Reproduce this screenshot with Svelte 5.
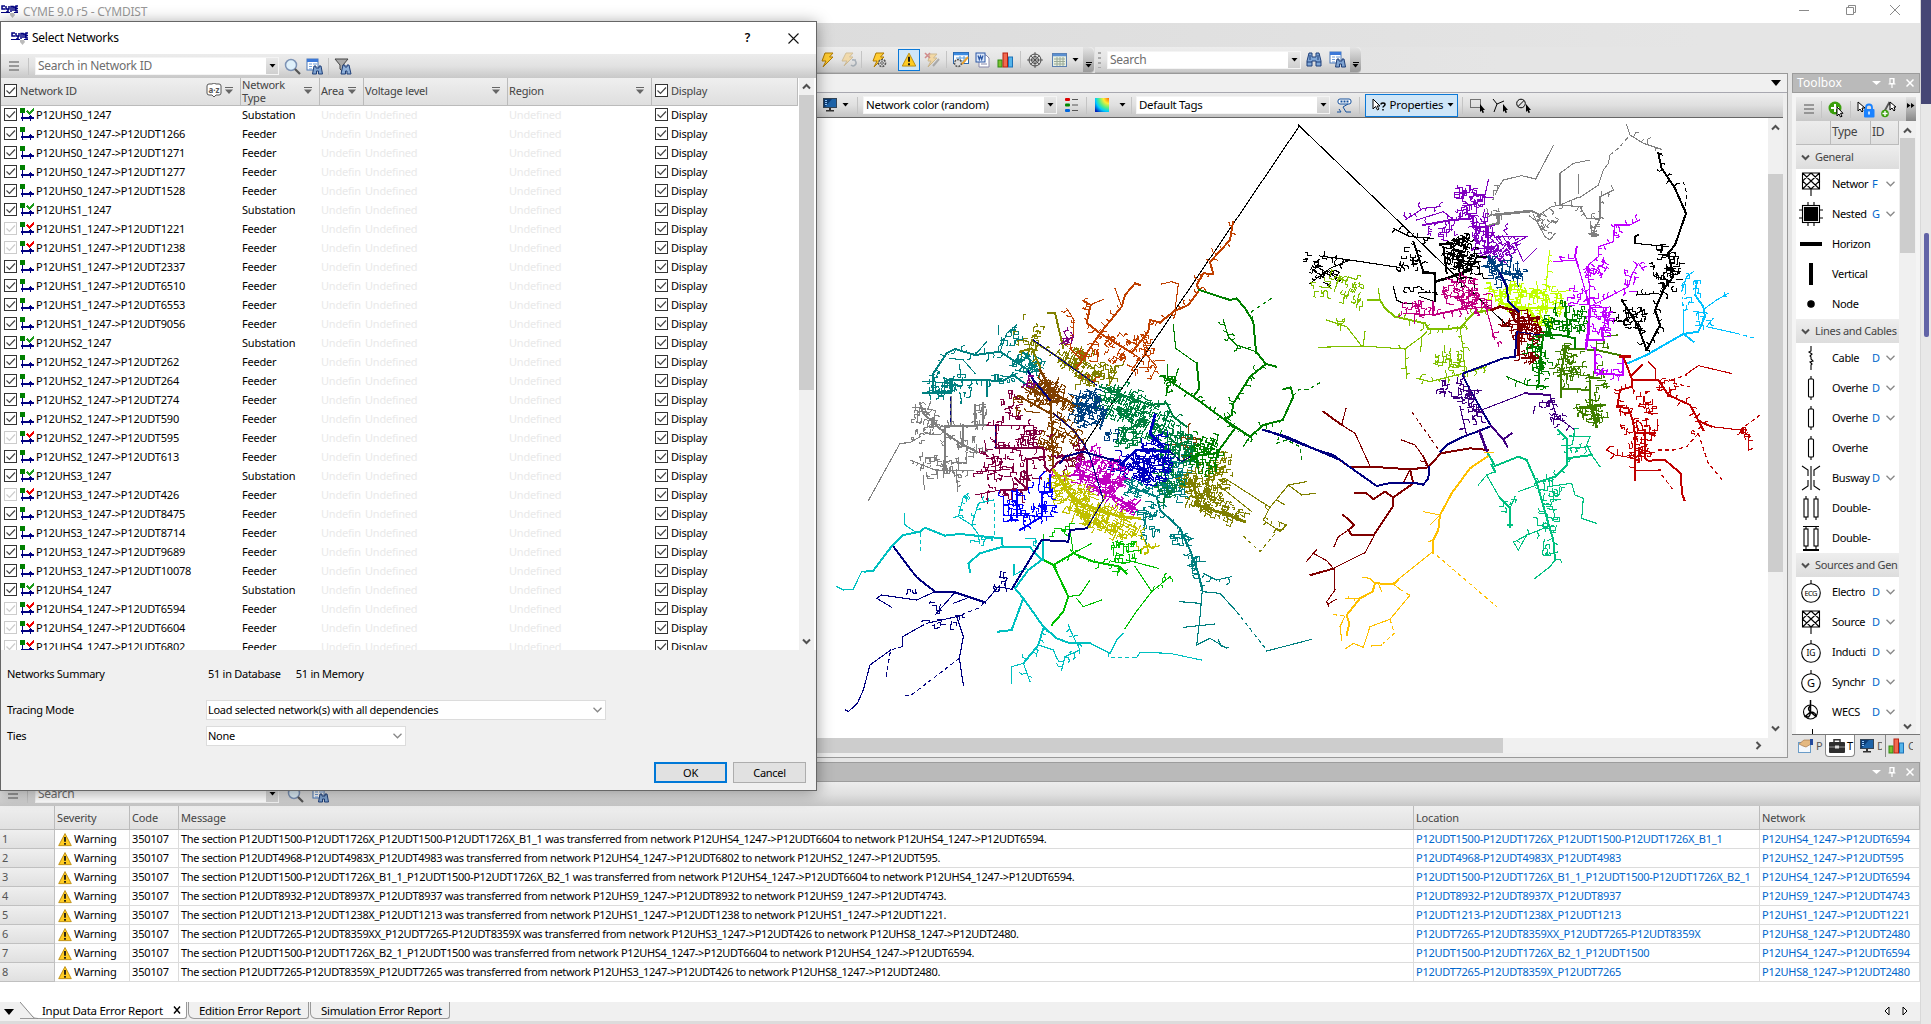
<script>
  const networks = [
    ['P12UHS0_1247', 's'], ['P12UHS0_1247->P12UDT1266', 'f'], ['P12UHS0_1247->P12UDT1271', 'f'],
    ['P12UHS0_1247->P12UDT1277', 'f'], ['P12UHS0_1247->P12UDT1528', 'f'], ['P12UHS1_1247', 's'],
    ['P12UHS1_1247->P12UDT1221', 'r'], ['P12UHS1_1247->P12UDT1238', 'r'], ['P12UHS1_1247->P12UDT2337', 'f'],
    ['P12UHS1_1247->P12UDT6510', 'f'], ['P12UHS1_1247->P12UDT6553', 'f'], ['P12UHS1_1247->P12UDT9056', 'f'],
    ['P12UHS2_1247', 's'], ['P12UHS2_1247->P12UDT262', 'f'], ['P12UHS2_1247->P12UDT264', 'f'],
    ['P12UHS2_1247->P12UDT274', 'f'], ['P12UHS2_1247->P12UDT590', 'f'], ['P12UHS2_1247->P12UDT595', 'r'],
    ['P12UHS2_1247->P12UDT613', 'f'], ['P12UHS3_1247', 's'], ['P12UHS3_1247->P12UDT426', 'r'],
    ['P12UHS3_1247->P12UDT8475', 'f'], ['P12UHS3_1247->P12UDT8714', 'f'], ['P12UHS3_1247->P12UDT9689', 'f'],
    ['P12UHS3_1247->P12UDT10078', 'f'], ['P12UHS4_1247', 's'], ['P12UHS4_1247->P12UDT6594', 'r'],
    ['P12UHS4_1247->P12UDT6604', 'r'], ['P12UHS4_1247->P12UDT6802', 'r']
  ];

  const errors = [
    ['P12UDT1500-P12UDT1726X_P12UDT1500-P12UDT1726X_B1_1', 'P12UHS4_1247->P12UDT6604', 'P12UHS4_1247->P12UDT6594'],
    ['P12UDT4968-P12UDT4983X_P12UDT4983', 'P12UHS4_1247->P12UDT6802', 'P12UHS2_1247->P12UDT595'],
    ['P12UDT1500-P12UDT1726X_B1_1_P12UDT1500-P12UDT1726X_B2_1', 'P12UHS4_1247->P12UDT6604', 'P12UHS4_1247->P12UDT6594'],
    ['P12UDT8932-P12UDT8937X_P12UDT8937', 'P12UHS9_1247->P12UDT8932', 'P12UHS9_1247->P12UDT4743'],
    ['P12UDT1213-P12UDT1238X_P12UDT1213', 'P12UHS1_1247->P12UDT1238', 'P12UHS1_1247->P12UDT1221'],
    ['P12UDT7265-P12UDT8359XX_P12UDT7265-P12UDT8359X', 'P12UHS3_1247->P12UDT426', 'P12UHS8_1247->P12UDT2480'],
    ['P12UDT1500-P12UDT1726X_B2_1_P12UDT1500', 'P12UHS4_1247->P12UDT6604', 'P12UHS4_1247->P12UDT6594'],
    ['P12UDT7265-P12UDT8359X_P12UDT7265', 'P12UHS3_1247->P12UDT426', 'P12UHS8_1247->P12UDT2480']
  ];

  const groups = [
    ['General', [['net', 'Networ', 'F'], ['nested', 'Nested', 'G'], ['horiz', 'Horizon', ''], ['vert', 'Vertical', ''], ['node', 'Node', '']]],
    ['Lines and Cables', [['cable', 'Cable', 'D'], ['over', 'Overhe', 'D'], ['over', 'Overhe', 'D'], ['over', 'Overhe', ''], ['bus', 'Busway', 'D'], ['dbl', 'Double-', ''], ['dbl2', 'Double-', '']]],
    ['Sources and Gen', [['ecg', 'Electro', 'D'], ['net', 'Source', 'D'], ['ig', 'Inducti', 'D'], ['g', 'Synchr', 'D'], ['wecs', 'WECS', 'D']]]
  ];

  // Toolbar slots: [item, slot width]
  const mainBar = [['bolt', 20], ['boltFade', 24], ['sep', 1], ['boltGear', 34], ['warnBtn', 26], ['boltX', 20], ['sep', 8], ['tableGear', 22], ['word', 20], ['chart', 26], ['sep', 4], ['radar', 26], ['grid', 22], ['caret', 10]];

  // Deterministic pseudo random numbers so the drawing is stable
  let seed = 20117;
  const rnd = () => ((seed = (seed * 16807) % 2147483647) / 2147483647);
  const f = (n) => n.toFixed(1);

  // Short stepped walks filling an ellipse, like street-level lateral lines
  function cluster(cx, cy, rx, ry, deg = 0, dens = 1) {
    const a = (deg * Math.PI) / 180;
    const n = Math.round((rx * ry * dens) / 50);
    let d = '';
    for (let i = 0; i < n; i++) {
      const r = Math.sqrt(rnd()), t = rnd() * 6.283;
      const u = r * rx * Math.cos(t), v = r * ry * Math.sin(t);
      let x = cx + u * Math.cos(a) - v * Math.sin(a);
      let y = cy + u * Math.sin(a) + v * Math.cos(a);
      let k = Math.floor(rnd() * 4);
      d += `M${f(x)} ${f(y)}`;
      const steps = 2 + Math.floor(rnd() * 3);
      for (let s = 0; s < steps; s++) {
        const ang = a + (k * Math.PI) / 2 + (rnd() - 0.5) * 0.45;
        const len = 5 + rnd() * 11;
        x += Math.cos(ang) * len;
        y += Math.sin(ang) * len;
        d += `L${f(x)} ${f(y)}`;
        k += rnd() < 0.5 ? 1 : rnd() < 0.6 ? 3 : 0;
      }
    }
    return d;
  }

  // Side branches along a feeder trunk
  function twigs(pts, len) {
    let d = '';
    for (let i = 1; i < pts.length; i++) {
      const [x0, y0] = pts[i - 1], [x1, y1] = pts[i];
      const L = Math.hypot(x1 - x0, y1 - y0);
      const ang = Math.atan2(y1 - y0, x1 - x0);
      for (let s = rnd() * 14; s < L; s += 10 + rnd() * 20) {
        const side = rnd() < 0.5 ? 1 : -1;
        const b = ang + side * (1.2 + rnd() * 0.7);
        const l = len * (0.4 + rnd());
        const x = x0 + Math.cos(ang) * s, y = y0 + Math.sin(ang) * s;
        const mx = x + Math.cos(b) * l, my = y + Math.sin(b) * l;
        d += `M${f(x)} ${f(y)}L${f(mx)} ${f(my)}`;
        if (rnd() < 0.5) d += `L${f(mx + Math.cos(b + 1) * l * 0.6)} ${f(my + Math.sin(b + 1) * l * 0.6)}`;
      }
    }
    return d;
  }

  const parse = (s) => s.split(' ').map((p) => p.split(',').map(Number));

  // [colour, clusters, [style, points]...]; style: weight 1-3, "t" with branches, "d" dashed
  const west = [
    ['#000', [], ['1', '1440,-435 795,520']],
    ['#808080', [[315, 470, 45, 55, 10, .45], [360, 590, 75, 35, 0, .5], [440, 530, 40, 30, 0, .5], [480, 430, 22, 30, 0, .7], [300, 410, 20, 25, 0, .5]],
      ['1', '145,692 240,520 270,518 300,500'], ['2t', '300,400 310,430 370,485 420,520 470,545'], ['2t', '375,600 375,468 500,466'], ['2', '465,466 465,405'], ['2', '490,466 490,400'], ['2', '428,466 428,520'], ['2', '392,380 392,466'], ['1t', '270,570 345,600 460,602'], ['1t', '410,600 412,665']],
    ['#008080', [[620, 280, 40, 24, 20, 2], [350, 350, 45, 32, 0, .8], [565, 205, 35, 38, 0, .4], [425, 345, 38, 30, 0, .6], [560, 325, 30, 15, 0, .8], [960, 650, 45, 25, 20, 1], [990, 755, 28, 55, 0, .7], [1065, 620, 40, 70, 0, 1], [1080, 800, 22, 22, 0, 1], [1115, 880, 20, 30, 0, .6]],
      ['2t', '370,370 340,370 340,310 380,250 405,237 465,255 540,245 625,300'], ['2t', '392,330 550,332 580,315 620,345'], ['2', '310,370 392,370 392,330'], ['2', '500,330 500,378'], ['1t', '540,245 560,190 590,165'], ['1', '465,255 500,215'], ['1', '390,265 430,270 465,310'],
      ['2t', '930,650 1010,680 1020,720 1080,775 1110,840'], ['2t', '1110,840 1135,910 1147,960'], ['1', '1147,960 1140,1040 1130,1125 1170,1105 1220,1135'], ['1', '1147,965 1200,970 1250,1025'], ['1d', '1250,1025 1340,1140'], ['1', '1340,1143 1475,1108'], ['1t', '1150,910 1190,930 1235,920'], ['1', '1090,1072 1185,1062'], ['1', '1080,995 1140,1000'], ['1', '1195,1110 1205,1130 1225,1133']],
    ['#808000', [[625, 185, 40, 40, 0, .5], [785, 290, 55, 50, 30, .7], [860, 305, 30, 25, 0, .7], [760, 260, 50, 25, 30, .5], [825, 325, 50, 20, 0, 1], [1150, 630, 65, 55, 0, 1.1], [1190, 710, 90, 32, 20, 1], [1220, 580, 28, 40, 0, .4]],
      ['2', '685,128 705,128 730,235'], ['2t', '635,210 720,265 815,335'], ['2t', '600,245 635,235 660,290'], ['1', '870,285 885,310 870,340'], ['1', '1215,625 1350,712'], ['1', '1350,712 1405,645 1460,635'], ['1', '1405,645 1445,675 1485,670'], ['1', '1370,690 1395,705'], ['1', '1195,645 1295,725'], ['1t', '1350,712 1330,750 1380,785 1400,765 1375,755'], ['3', '1130,705 1225,735 1275,755'], ['3', '1120,640 1135,700'], ['1d', '1270,798 1320,845 1370,785']],
    ['#804000', [[680, 365, 52, 30, 30, 1.8], [725, 510, 55, 65, 20, .65], [620, 400, 38, 30, 0, .6], [1105, 520, 20, 42, 0, 1.1], [735, 395, 40, 15, 25, 1.6]],
      ['3t', '660,300 700,370 775,410'], ['2t', '690,370 695,460 700,590'], ['2t', '700,430 760,480 790,520'], ['2t', '620,350 680,380'], ['2', '600,380 690,430']],
    ['#008040', [[890, 395, 55, 52, 25, 1.1], [985, 440, 75, 50, 25, 1.1], [920, 500, 35, 35, 0, 1], [1075, 540, 55, 60, 0, 1], [1045, 640, 35, 45, 0, 1]],
      ['2t', '840,350 990,405 1040,400 1060,440 1100,470'], ['2', '900,520 920,480 960,460'], ['2', '1020,480 1080,530 1075,570']],
    ['#004080', [[810, 415, 48, 52, 20, 1.4], [875, 490, 15, 22, 0, .7]], ['2', '760,400 860,420 840,475']],
    ['#c04000', [[890, 240, 60, 45, 30, .4], [990, 280, 25, 45, 0, .4], [970, 210, 25, 30, 0, .6], [795, 330, 18, 10, 0, .9], [820, 250, 40, 30, 0, .3]],
      ['1t', '1239,-144 1230,-90 1170,-24'], ['2', '1239,-144 1230,-90 1170,-24 1180,12'], ['2t', '1180,12 1150,10 1130,45 1138,60 1105,105 1060,125 1020,158 990,150 985,185 935,248 880,215 840,190 800,158 812,105 790,92'], ['2t', '905,110 840,190 770,295'], ['2', '960,45 945,40 915,75 905,110'], ['1', '885,55 905,110'], ['1t', '740,115 762,150 760,190 750,235 780,265'], ['1', '1025,42 1055,35 1075,42 1065,120'], ['1t', '970,225 980,255 1010,290 990,330'], ['1t', '935,248 960,265 935,300'], ['1', '810,105 850,88']],
    ['#008000', [[1155, 565, 45, 42, 0, 1], [1050, 340, 25, 22, 0, .8], [1150, 520, 50, 25, 20, .5]],
      ['2', '1138,60 1230,90 1250,85 1275,115 1300,155 1308,245 1338,282'], ['2t', '1338,282 1290,320 1240,400 1235,435 1215,450 1245,475'], ['2', '1245,475 1190,550 1150,555 1110,560'], ['1', '1060,165 1067,235 1130,280'], ['2', '1130,280 1138,355 1120,380'], ['2t', '1120,380 1215,450 1290,500 1330,465 1388,450'], ['2', '1388,450 1420,380 1412,352 1390,358'], ['2t', '1030,320 1120,380'], ['1d', '1420,378 1435,360 1465,358 1500,338'], ['1t', '1210,150 1225,200 1250,225 1308,245'], ['1d', '1355,85 1295,125 1300,155'], ['1', '1060,345 1075,295'], ['1', '1290,500 1270,530'], ['1d', '1385,480 1370,520 1400,510 1440,530 1445,575'], ['2', '1338,282 1368,290']],
    ['#0000c0', [[1000, 575, 50, 68, 10, 1.2], [910, 585, 40, 30, 0, .8], [940, 610, 40, 30, 30, .6]],
      ['3', '900,585 950,540 1050,545'], ['3', '1005,435 990,490 1030,530'], ['2', '935,565 970,600 970,630']],
    ['#800040', [[560, 600, 85, 80, 0, .42], [570, 410, 30, 45, 0, .5], [640, 500, 45, 35, 0, .6], [735, 570, 40, 18, -15, .8], [780, 540, 20, 20, 0, 1]],
      ['2t', '527,465 527,533 670,533 675,590 690,605'], ['1t', '500,466 640,466 640,530'], ['2', '675,560 620,568 620,655 585,625'], ['1t', '620,660 540,660 465,675'], ['1t', '470,605 540,600'], ['2', '690,605 715,575 780,560 795,525']],
    ['#c000c0', [[840, 615, 80, 50, 15, 1.3], [900, 690, 55, 22, 35, 1.6], [830, 550, 20, 18, 0, .6]], ['2t', '690,620 780,615 900,640'], ['2', '850,660 950,720']],
    ['#c0c000', [[725, 645, 30, 45, -20, 1.2], [795, 710, 60, 50, 20, 1.2], [880, 760, 85, 38, 25, 1.1], [980, 835, 18, 28, 0, .8]], ['3', '700,600 740,660 780,700 900,740 960,745'], ['2', '740,660 800,760'], ['1t', '960,780 985,840']],
    ['#0000ff', [[600, 710, 52, 50, 0, .5], [685, 690, 30, 45, 0, .55]], ['2', '660,665 690,665 690,615'], ['2t', '665,670 665,740 600,780'], ['1t', '550,735 700,740'], ['2t', '590,660 590,740'], ['1', '655,660 660,620 675,605']],
    ['#00c000', [[905, 855, 45, 45, 0, .6], [730, 785, 28, 14, 0, .5]], ['2', '670,870 700,885 745,980 730,1025 695,1065'], ['1', '670,795 670,870'], ['2t', '700,885 760,850 820,875 900,890 920,910'], ['1', '760,850 750,780 705,775'], ['1', '760,850 815,820'], ['1', '945,890 995,965 945,1030'], ['1', '945,1030 915,1075'], ['1t', '995,965 1050,920'], ['1', '745,980 780,975 810,930'], ['1', '770,985 790,1010 845,990'], ['1', '920,870 1015,895']],
    ['#00c0c0', [[490, 820, 18, 18, 0, .6], [640, 820, 12, 20, 0, .6]],
      ['2', '135,905 160,902 218,825 250,795 300,785 315,773 375,797 420,792 545,805 548,830 630,832 665,870'], ['2', '665,870 625,900 585,955 610,985 670,1070 710,1105 750,1120 810,1120'], ['1', '810,1120 870,1150 890,1110 910,1090'], ['2', '669,870 669,810'], ['1', '50,950 70,960 100,957 125,905 160,902'], ['2', '548,830 480,850 445,880 450,905'], ['1', '253,730 255,765 285,785'], ['1d', '302,790 302,845'], ['2', '610,985 575,1080 535,1085'], ['2t', '670,1075 655,1125 610,1180'], ['1', '610,1180 575,1190 575,1240'], ['1t', '610,1180 630,1235'], ['1', '655,1125 700,1140 710,1165'], ['1t', '745,1065 760,1100 780,1140 735,1160 725,1200'], ['1d', '865,1150 865,1162 950,1162'], ['1', '950,1162 960,1147 1050,1150 1120,1165 1145,1170'], ['1t', '415,740 430,680 445,670'], ['1', '400,742 415,740 455,765 480,800'], ['1t', '455,765 475,700 520,690'], ['1d', '523,700 523,800'], ['1', '582,885 582,915 620,895']],
    ['#000080', [[335, 1055, 26, 12, 0, .6], [340, 1000, 28, 10, 0, .5], [545, 935, 22, 22, 0, .6], [395, 1045, 20, 14, 0, .7], [280, 972, 15, 12, 0, .5]],
      ['2', '625,305 640,330 690,390'], ['1', '640,210 830,345'], ['1', '700,430 760,480 790,520 810,560 850,690 800,775'], ['2', '800,775 750,780 745,815 665,810 575,958'], ['2', '720,580 735,560 790,545 895,575'], ['1', '1050,545 1085,575 1110,560'], ['2', '222,832 290,922 345,965 405,967 495,997'], ['1', '495,997 535,950 575,958'], ['2', '1330,480 1400,500 1490,540 1560,570'], ['1', '345,965 290,990 185,975 170,985 215,1012'], ['1', '405,967 345,1035'], ['1', '440,985 400,1000'], ['1', '320,1060 410,1040 430,1100 418,1165 430,1245'], ['1', '310,1065 248,1100 247,1130'], ['1', '212,1140 150,1185 130,1260 112,1300 85,1325 77,1320'], ['1d', '247,1130 212,1140 197,1225'], ['1d', '418,1165 270,1278 250,1275'], ['1d', '490,1000 480,1012 410,1040'], ['1d', '392,380 392,466'], ['1d', '527,466 527,533']],
    ['#800080', [[740, 211, 9, 4, -20, 8], [617, 345, 6, 6, 0, 5]]]
  ];

  const east = [
    ['#808080', [[825, 345, 30, 28, 30, .5], [975, 360, 20, 22, 0, .5], [670, 290, 10, 35, 0, .8]],
      ['1', '690,225 700,210 755,197 797,207 850,107'], ['3', '655,348 685,340 688,313 785,303'], ['2', '785,303 810,315'], ['1t', '800,320 845,290 870,285 930,290 950,325 990,325'], ['1', '870,260 870,190 910,160 960,150'], ['1', '925,195 925,250'], ['1', '870,285 870,260'], ['1', '930,262 985,225 1000,180 1015,160 1020,135'], ['1d', '1020,135 1045,115 1080,75'], ['1', '870,285 925,262'], ['1t', '1080,75 1120,100 1175,118'], ['1', '1080,75 1070,45'], ['1t', '990,325 990,260 1030,240 1025,228'], ['1t', '990,325 965,375 985,375'], ['1', '790,315 825,380 840,390 855,370'], ['1d', '690,225 668,270']],
    ['#8000c0', [[600, 280, 45, 45, 0, .9], [640, 365, 35, 65, 0, .8], [690, 415, 50, 40, -35, 1], [520, 360, 38, 18, 0, .7]],
      ['1t', '405,330 460,295 510,290'], ['1', '440,330 520,305 545,325'], ['2t', '460,345 545,330 610,325 610,350 655,350'], ['2', '655,350 655,430'], ['1', '700,380 770,380 735,400 760,455 800,415'], ['1', '655,210 645,255 610,255']],
    ['#000', [[570, 425, 50, 50, 20, 1.3], [590, 485, 40, 28, 0, 1], [120, 440, 38, 28, 0, .25], [160, 490, 42, 25, 30, .5], [415, 460, 32, 35, 0, .5], [450, 550, 40, 18, 0, .35], [1180, 470, 45, 55, 0, .5], [1080, 620, 50, 45, 0, .45], [1205, 510, 20, 30, 0, .5]],
      ['1', '85,45 715,650'], ['2t', '430,395 460,485'], ['3', '460,487 495,490 495,515 530,505 600,480'], ['2', '600,480 620,440 655,440'], ['1', '495,515 495,575 450,560'], ['1', '370,530 380,570 400,580 430,580'], ['1', '240,450 385,472'], ['1t', '150,438 240,450 180,475 120,520'], ['1t', '370,355 420,380 490,385'], ['3', '510,403 545,400'], ['2', '520,410 530,490'],
      ['2t', '1165,130 1175,175 1215,235'], ['2', '1215,235 1248,310 1215,405 1195,430'], ['2t', '1195,430 1210,500 1180,540 1155,600 1170,645 1130,720'], ['1d', '1240,215 1250,250 1245,310'], ['2', '1103,375 1095,380 1095,400'], ['1', '1095,400 1195,410'], ['2t', '1055,570 1100,640 1130,720'], ['1t', '1100,555 1165,550']],
    ['#004080', [[710, 490, 55, 32, 0, .9], [680, 470, 25, 25, 0, .8]], ['3', '655,440 690,490 710,530'], ['2', '690,490 755,492']],
    ['#80c000', [[225, 535, 50, 38, 20, .55], [160, 540, 35, 15, 0, .5], [540, 755, 45, 38, 0, .6], [200, 640, 28, 18, 0, .4], [290, 600, 40, 14, 0, .2]],
      ['2', '295,570 330,570 345,595 375,620'], ['2t', '375,620 465,640 475,657 570,655 610,610 660,600'], ['1t', '570,655 580,720 585,800'], ['1', '145,712 275,708 405,717'], ['1t', '405,717 410,805'], ['1', '275,708 230,650 170,630'], ['1', '405,717 455,680 470,665'], ['1', '455,680 452,725'], ['1', '285,665 280,705'], ['1t', '440,805 480,815 580,790 650,770'], ['1', '325,535 330,570']],
    ['#c00080', [[580, 545, 62, 38, 10, .9], [440, 600, 48, 26, 0, .5], [630, 580, 25, 30, 0, .9], [685, 700, 9, 20, -20, .6]], ['1t', '400,610 490,615 560,600 650,590'], ['2', '490,575 490,615 560,600 620,580'], ['1', '650,600 675,690']],
    ['#c0ff00', [[745, 560, 60, 38, 0, 1], [840, 565, 42, 35, 0, 1], [810, 615, 32, 28, 0, 1], [675, 545, 18, 22, 0, 1]], ['1t', '840,420 835,450 828,540'], ['2', '700,592 880,595'], ['3', '690,540 695,580 780,600 800,635']],
    ['#800000', [[745, 640, 30, 50, 0, 1.2], [780, 665, 32, 45, 0, 1.2], [775, 735, 28, 24, 0, 1]], ['3', '665,600 690,590 745,605 745,730'], ['2', '745,640 805,645'], ['2', '755,745 805,745'],
      ['2', '140,1020 190,1035 240,1072 300,1070 420,1078 475,1072 512,1030 600,1015 655,1020'], ['1', '300,1068 255,970 215,945'], ['2', '215,945 160,905'], ['1', '215,945 228,895'], ['2t', '475,1072 460,1040'], ['1', '460,1040 435,1005 395,990'], ['1d', '425,905 510,1025'], ['2', '420,1078 430,1120 370,1162 368,1190 312,1275 245,1275 235,1260 253,1245 220,1215'], ['2', '370,1162 345,1145 310,1168 290,1150 255,1150'], ['1', '400,1118 420,1078'], ['1', '312,1278 285,1328 190,1375 170,1352 130,1330 140,1320'], ['1', '235,1260 205,1280 192,1310'], ['1', '130,1330 110,1354'], ['2', '190,1376 122,1395'], ['1', '192,1376 195,1440 170,1475'], ['1', '170,1475 175,1488'], ['1', '175,1482 198,1468']],
    ['#408000', [[970, 905, 40, 40, 0, 1], [885, 750, 30, 60, 0, .6], [935, 770, 55, 50, 0, .35], [1000, 692, 28, 12, 0, .5], [1000, 820, 25, 30, 0, .4]],
      ['2', '885,715 980,720 1060,738'], ['2t', '885,715 872,800 872,860'], ['2t', '872,835 960,840'], ['3', '960,815 960,880 980,950'], ['1t', '890,790 970,800'], ['3', '930,893 1005,885'], ['1', '980,720 980,690']],
    ['#008000', [[850, 645, 40, 30, 0, .9], [912, 630, 40, 48, 0, .7], [795, 705, 25, 28, 0, .8], [820, 780, 25, 55, 0, .6]], ['2', '810,675 870,675 915,685 915,715'], ['2', '885,575 895,680'], ['1t', '710,800 770,825 835,830'], ['2t', '820,675 810,750 805,830']],
    ['#c000ff', [[985, 485, 30, 42, 20, .5], [920, 560, 32, 35, 0, .5], [990, 640, 32, 55, 0, .8], [1055, 365, 28, 20, 0, .4], [1080, 520, 22, 30, 0, .4], [890, 450, 30, 8, 0, .5], [1030, 790, 25, 25, 0, .35]],
      ['3', '960,590 955,660 948,715'], ['1t', '1108,330 1080,345 1035,345 1030,395 985,410 985,440'], ['1t', '985,440 955,465 960,590'], ['2', '920,412 915,440 925,470'], ['1', '925,470 945,540 960,590'], ['1', '850,455 920,450'], ['1t', '960,590 1075,530 1085,495 1105,460 1120,480'], ['2t', '975,715 975,790 1060,795 1060,740'], ['3', '950,690 1000,690 995,655']],
    ['#00c0ff', [[1255, 600, 18, 28, 0, .4], [1255, 525, 30, 35, 0, .4], [1300, 640, 25, 20, 0, .5], [1370, 552, 8, 8, 0, 1]],
      ['2', '1068,762 1130,735 1240,672 1285,665 1305,620 1300,590 1275,555'], ['1', '1310,650 1400,670'], ['1d', '1400,670 1455,685'], ['1', '1240,672 1240,610'], ['1d', '1240,610 1238,560'], ['1', '1235,545 1250,500 1270,485'], ['1', '1305,595 1340,570 1375,550'], ['2', '1245,675 1270,695'], ['1', '1310,650 1330,625']],
    ['#c00000', [[1120, 895, 35, 50, 0, .45], [1195, 825, 28, 20, 0, .7], [1110, 1020, 35, 55, 0, .5], [1060, 935, 22, 30, 0, .4], [1430, 975, 22, 15, 0, .6], [1140, 975, 18, 18, 0, .5], [1285, 950, 15, 20, 0, .5]],
      ['2', '1060,740 1085,805 1085,830'], ['2t', '1085,830 1050,840 1042,890 1075,895 1088,930 1095,970'], ['2t', '1095,970 1095,1080'], ['1', '1095,1080 1095,1110'], ['2', '1085,810 1165,810 1195,855 1260,885'], ['2t', '1165,810 1195,855 1260,885 1290,940 1300,960'], ['2', '1290,935 1325,950'], ['1', '1325,950 1410,960'], ['1t', '1410,960 1435,975 1435,1020'], ['1d', '1410,960 1470,915'], ['2', '1095,970 1155,970'], ['2', '1125,970 1125,1045 1135,1052 1185,1050 1232,1090 1236,1150 1243,1170'], ['1d', '1205,810 1250,795'], ['1', '1245,795 1285,767 1383,790'], ['2', '1085,795 1115,765'], ['1d', '1165,1020 1210,1020 1250,1010 1285,970'], ['1d', '1285,970 1315,1060 1357,1110'], ['1t', '1010,1020 1035,1035 1095,1045'], ['1', '1095,1082 1170,1080'], ['1d', '1175,1095 1210,1140'], ['1d', '1210,820 1260,830'], ['1', '1135,755 1155,775 1158,810'], ['3', '1052,740 1078,740']],
    ['#000080', [], ['2', '0,965 140,1020 190,1035 245,1075 320,1128 365,1118 430,1118'], ['2', '430,1118 460,1124 475,1105 478,1070'], ['2', '512,1025 530,1005 580,980 630,962 663,948 635,900 600,840 580,800 580,790 700,745 735,740 740,670'], ['2', '690,490 710,530 715,575 745,605'], ['1', '740,665 810,675']],
    ['#400080', [[565, 845, 58, 26, 0, .8], [605, 885, 30, 32, 0, .8], [825, 880, 28, 18, 0, .5], [870, 935, 28, 24, 0, .4]], ['1t', '570,890 590,975'], ['1', '635,900 765,850'], ['2', '765,850 840,855'], ['1t', '840,855 860,920 915,960'], ['3', '628,962 650,1022'], ['2', '663,948 700,988 725,970'], ['2', '700,988 712,1010'], ['1', '795,890 790,910']],
    ['#ffc000', [], ['2', '655,1028 655,1038 600,1075 545,1150 510,1215 505,1260 490,1290 488,1328'], ['1', '645,1028 670,1028'], ['1', '460,1205 510,1215 480,1245'], ['1', '475,1295 490,1290'], ['1', '485,1328 370,1420'], ['1d', '500,1336 680,1490'],
      ['2', '385,1410 370,1422 315,1420 308,1445 270,1465 230,1515 238,1540 230,1575'], ['1', '370,1422 390,1438'], ['1d', '390,1438 418,1455'], ['1', '418,1458 360,1528 300,1550 280,1612 250,1600 228,1615'], ['1d', '360,1528 373,1570 340,1600'], ['1', '305,1608 335,1605'], ['1d', '190,1514 225,1518'], ['1', '225,1518 210,1550 215,1590'], ['1t', '228,1465 270,1465'], ['1', '278,1402 300,1405 315,1420'], ['1', '325,1420 335,1445']],
    ['#00c080', [[845, 1140, 30, 20, 0, .8], [840, 1210, 12, 40, 0, .8], [835, 1255, 22, 12, 0, 1], [840, 1325, 20, 12, 0, 1], [900, 1010, 25, 28, 0, .3], [722, 1185, 18, 18, 0, .6]],
      ['2', '655,1032 675,1068 745,1040 770,1050 800,1118'], ['2t', '800,1118 855,1100 890,1065 890,985 865,960'], ['2t', '800,1118 835,1240'], ['2t', '835,1240 850,1290 855,1350'], ['1', '855,1350 840,1370 795,1405'], ['2', '890,1045 965,1035'], ['1', '965,1035 990,1070'], ['1t', '890,1015 960,1010'], ['1', '900,978 960,980 950,1005 965,1035'], ['1', '675,1085 650,1095 690,1165'], ['2', '690,1165 720,1195'], ['1', '720,1195 735,1160'], ['2', '720,1200 720,1250'], ['3', '716,1245 724,1245'], ['2', '665,1065 675,1085'], ['1', '650,1095 625,1125'], ['1', '730,1295 745,1320 770,1275'], ['1t', '735,1295 770,1275 835,1250'], ['1', '745,1145 800,1125'], ['1', '835,1130 905,1120 915,1155 940,1165 935,1225 980,1240']]
  ];

  function build(layer) {
    const out = [];
    for (const [color, clusters, ...lines] of layer) {
      let thin = clusters.map((c) => cluster(...c)).join('');
      const paths = [];
      for (const [style, s] of lines) {
        const pts = parse(s);
        if (style.includes('t')) thin += twigs(pts, 12);
        paths.push({ color, w: style[0], dash: style.includes('d'), d: 'M' + pts.map((p) => p.join(' ')).join('L') });
      }
      out.push({ color, w: '1', dash: false, d: thin }, ...paths);
    }
    return out.filter((p) => p.d);
  }
  const westPaths = build(west);
  const eastPaths = build(east);
</script>

{#snippet icon(n)}
  {#if n === 'burger'}
    <svg width="12" height="12" viewBox="0 0 12 12"><path d="M1 2h10M1 6h10M1 10h10" stroke="#808080" stroke-width="1.6" /></svg>
  {:else if n === 'logo'}
    <svg width="17" height="13" viewBox="0 0 17 13"><path d="M4 1H1v3h3M5 1v3h3V1M7 4v3H5M10 7V1.5h2V6M12 2h2v4M17 1h-2v5h2M15 3.500h2" fill="none" stroke="#000080" stroke-width="1.5" /><path d="M0 7.500h9M13 7.500h4" stroke="#000080" /><path d="M9 8h4l1 2-2.500 3L9 10z" fill="#bbb" /></svg>
  {:else if n === 'lens'}
    <svg width="17" height="17" viewBox="0 0 17 17"><circle cx="7" cy="7" r="5.500" fill="#dff0fa" stroke="#7d93b5" stroke-width="1.500" /><path d="M11 11l5 5" stroke="#555" stroke-width="2.200" /></svg>
  {:else if n === 'tableBino'}
    <svg width="17" height="17" viewBox="0 0 17 17"><rect x="1" y="1" width="11" height="11" fill="#fff" stroke="#4a78b8" /><rect x="1" y="1" width="11" height="3" fill="#3c78d8" /><path d="M3 6h3M7 6h4M3 8.500h3M3 11h3" stroke="#6f9bd8" /><path d="M8 8h2v2h3V8h2l1.500 8h-4v-3h-2v3h-4z" fill="#7fa3d0" stroke="#1f3f78" /></svg>
  {:else if n === 'filterBino'}
    <svg width="18" height="17" viewBox="0 0 18 17"><path d="M1 1h13L9 7v7l-3-3V7z" fill="#aaa" stroke="#444" /><path d="M9 7h2v2h2V7h2l2 9h-4v-3h-1.500v3H7z" fill="#8fb0d8" stroke="#1f3f78" /></svg>
  {:else if n === 'bino'}
    <svg width="16" height="15" viewBox="0 0 16 15"><path d="M3 1h3v4h4V1h3l2 8v5h-5V9H6v5H1V9z" fill="#7fa6d6" stroke="#1f3f78" /><path d="M1 10h5M10 10h5M4 3v5M12 3v5" stroke="#1f3f78" /></svg>
  {:else if n === 'bolt'}
    <svg width="15" height="16" viewBox="0 0 15 16"><path d="M5 1h8L9.500 5H13L3 15l3-6H2z" fill="#fc3" stroke="#b07a00" /></svg>
  {:else if n === 'boltFade'}
    <svg width="17" height="16" viewBox="0 0 17 16" opacity=".45"><path d="M5 1h7L8.500 5H12L3 14l3-5H1z" fill="#fc6" stroke="#b89040" /><path d="M11 8a3 3 0 1 1-1 5m1-5l4 0" fill="none" stroke="#678" stroke-width="1.500" /></svg>
  {:else if n === 'boltGear'}
    <svg width="16" height="16" viewBox="0 0 16 16"><path d="M5 1h8L9.500 5H13L3 15l3-6H2z" fill="#fc3" stroke="#b07a00" /><circle cx="11" cy="11" r="3.500" fill="#ddd" stroke="#555" stroke-dasharray="2 1" stroke-width="1.600" /><circle cx="11" cy="11" r="1.300" fill="#fff" stroke="#555" /></svg>
  {:else if n === 'boltX'}
    <svg width="17" height="16" viewBox="0 0 17 16" opacity=".5"><path d="M6 2h7L9.500 6H13L4 15l3-6H4z" fill="#fc6" stroke="#b89040" /><path d="M1 1l5 5M6 1L1 6" stroke="#b33" stroke-width="1.600" /><path d="M9 14l6-7" stroke="#777" stroke-width="2" /></svg>
  {:else if n === 'warn'}
    <svg class="warn" viewBox="0 0 16 16"><path d="M8 1.200L15.200 15H.8z" fill="#fc2" stroke="#b98a10" stroke-linejoin="round" /><path d="M8 5v5.500M8 12v2" stroke="#111" stroke-width="2" /></svg>
  {:else if n === 'tableGear'}
    <svg width="17" height="16" viewBox="0 0 17 16"><rect x=".5" y=".5" width="15" height="11" fill="#fff" stroke="#2a68b0" /><path d="M1 2h14" stroke="#3c8be0" stroke-width="2.500" /><path d="M3 6h10M3 9h10M7 4v7M11 4v7" stroke="#5b9fe0" /><circle cx="5" cy="11" r="3.500" fill="#ddd" stroke="#555" stroke-width="1.600" stroke-dasharray="2 1" /><path d="M9 12l6-7" stroke="#e8a030" stroke-width="2" /></svg>
  {:else if n === 'word'}
    <svg width="15" height="16" viewBox="0 0 15 16"><path d="M4 3h7l3 3v9H4z" fill="#fff" stroke="#88a" /><rect x="1" y="1" width="9" height="9" fill="#dce8fa" stroke="#2b57a5" /><path d="M3 3.500l1.300 4L5.500 4l1.200 3.500L8 3.500" fill="none" stroke="#2b57a5" stroke-width="1.200" /><path d="M6 12h6" stroke="#88a" /></svg>
  {:else if n === 'chart'}
    <svg width="17" height="16" viewBox="0 0 17 16"><rect x="1" y="8" width="4" height="7" fill="#7cc030" stroke="#2e8b12" /><rect x="6" y="1" width="4.500" height="14" fill="#f26a50" stroke="#b82010" /><rect x="11.500" y="5" width="4" height="10" fill="#55b4ea" stroke="#1c72b8" /></svg>
  {:else if n === 'radar'}
    <svg width="16" height="16" viewBox="0 0 16 16"><g fill="none" stroke="#444"><circle cx="8" cy="8" r="6" /><circle cx="8" cy="8" r="3.500" /><path d="M8 0v16M0 8h16M3.500 3.500l9 9M12.500 3.500l-9 9" stroke-width=".8" /></g></svg>
  {:else if n === 'grid'}
    <svg width="15" height="14" viewBox="0 0 15 14"><rect x=".5" y=".5" width="14" height="13" fill="#e8efe0" stroke="#5a7fb0" /><path d="M1 2h13" stroke="#5b8fd0" stroke-width="2.500" /><path d="M2 6h11M2 8.500h11M2 11h11M5 4v9M8 4v9M11 4v9" stroke="#9aaa98" /></svg>
  {:else if n === 'caret'}
    <svg width="7" height="4" viewBox="0 0 7 4"><path d="M.5 0h6L3.500 3.500z" fill="#000" /></svg>
  {:else if n === 'monitor'}
    <svg width="14" height="14" viewBox="0 0 14 14"><rect x=".5" y=".5" width="13" height="9" fill="#1d63a8" stroke="#345" /><path d="M1 1h8L2 9H1z" fill="#0c3c74" /><path d="M2 2.500h2M2 4.500h2M2 6.500h2" stroke="#9cf" /><path d="M6 10h2v2h3v1.500H3V12h3z" fill="#333" /></svg>
  {:else if n === 'legend'}
    <svg width="13" height="14" viewBox="0 0 13 14"><rect y="0" width="5" height="3" rx="1" fill="#d00" /><rect y="5.500" width="5" height="3" rx="1" fill="#080" /><rect y="11" width="5" height="3" rx="1" fill="#06d" /><path d="M7 1.500h6M7 7h6M7 12.500h6" stroke="#555" /></svg>
  {:else if n === 'rainbow'}
    <svg width="14" height="14" viewBox="0 0 14 14"><defs><radialGradient id="rb" cx="1" cy="0" r="1.300"><stop offset="0" stop-color="#f60" /><stop offset=".3" stop-color="#fe3" /><stop offset=".55" stop-color="#5e8" /><stop offset=".75" stop-color="#0cf" /><stop offset="1" stop-color="#02b" /></radialGradient></defs><rect width="14" height="14" fill="url(#rb)" /></svg>
  {:else if n === 'tag'}
    <svg width="15" height="15" viewBox="0 0 15 15"><rect x="1" y="1" width="13" height="5" rx="2" fill="#fff" stroke="#14509c" /><path d="M3.500 3.500h2M6.500 3.500h2M9.500 3.500h2" stroke="#14509c" stroke-width="2" /><path d="M11 6L6 9l3 5h5M0 14h4L2 11" fill="none" stroke="#14509c" /></svg>
  {:else if n === 'pick'}
    <svg width="15" height="14" viewBox="0 0 15 14"><path d="M2 1v10l2.500-2.500L6.500 12l1.500-1-2-3h3z" fill="#fff" stroke="#000" /><path d="M10 6.500c0-2 4-2 4 0 0 1.500-2 1.500-2 3M12 11v1.500" fill="none" stroke="#000" stroke-width="1.500" /></svg>
  {:else if n === 'selRect'}
    <svg width="16" height="15" viewBox="0 0 16 15"><rect x="1.500" y="1.500" width="10" height="8" fill="none" stroke="#000" stroke-dasharray="1 1" /><path d="M11 6v8l1.500-1.500 1 2.500 1.500-.5-1-2.500h2z" fill="#000" /></svg>
  {:else if n === 'selTree'}
    <svg width="16" height="15" viewBox="0 0 16 15"><path d="M1 1l4 5 7-3M5 6L2 14" fill="none" stroke="#000" /><path d="M11 6v8l1.500-1.500 1 2.500 1.500-.5-1-2.500h2z" fill="#000" /></svg>
  {:else if n === 'selNone'}
    <svg width="16" height="15" viewBox="0 0 16 15"><circle cx="6" cy="5.500" r="4.300" fill="none" stroke="#000" /><path d="M3 8.500l6-6" stroke="#000" /><path d="M11 6v8l1.500-1.500 1 2.500 1.500-.5-1-2.500h2z" fill="#000" /></svg>
  {:else if n === 'add'}
    <svg width="16" height="17" viewBox="0 0 16 17"><circle cx="7" cy="7" r="6.500" fill="#3a9f0c" /><path d="M7 3v8M3 7h8" stroke="#fff" stroke-width="2" /><path d="M9 6v9l2-2 1.500 3 1.500-.7-1.500-3H15z" fill="#fff" stroke="#000" /></svg>
  {:else if n === 'lock'}
    <svg width="18" height="17" viewBox="0 0 18 17"><path d="M1 1v9l2-2 2 3 1-1-1-3h3z" fill="#fff" stroke="#000" /><path d="M9 9V6.500a3 3 0 0 1 6 0V9" fill="none" stroke="#1a82ff" stroke-width="1.800" /><rect x="7" y="8" width="10.500" height="8.500" rx="1" fill="#1a82ff" /><path d="M12 10.500v3" stroke="#fff" stroke-width="1.500" /></svg>
  {:else if n === 'link'}
    <svg width="16" height="17" viewBox="0 0 16 17"><path d="M3 11L8 2l3 4" fill="none" stroke="#555" stroke-width="1.800" /><path d="M9 1v8l2-2 2 3 1-1-1-3h2z" fill="#fff" stroke="#000" /><circle cx="4" cy="12.500" r="3.800" fill="#3a9f0c" /><path d="M4 10v5M1.500 12.500h5" stroke="#fff" stroke-width="1.400" /></svg>
  {:else if n === 'more'}
    <svg width="8" height="5" viewBox="0 0 8 5"><path d="M0 0l3.500 2.500L0 5zM4 0l3.500 2.500L4 5z" fill="#000" /></svg>
  {:else if n === 'props'}
    <svg width="15" height="14" viewBox="0 0 15 14"><rect x=".5" y="3.500" width="12" height="10" fill="#f4f8fc" stroke="#6a9cc8" /><path d="M1 5l5-4 7 0v4L8 8 5 7z" fill="#e4b880" stroke="#a8784a" stroke-width=".7" /><rect x="12" y="0" width="3" height="6" fill="#234a9c" /></svg>
  {:else if n === 'case'}
    <svg width="16" height="14" viewBox="0 0 16 14"><path d="M5 3V.8h6V3" fill="none" stroke="#333" stroke-width="1.500" /><rect y="3" width="16" height="11" rx="1" fill="#2e2e2e" /><path d="M0 8h6M10 8h6" stroke="#999" /><rect x="6" y="6.500" width="4" height="3" fill="#ddd" /></svg>
  {:else if n === 'sort'}
    <svg width="16" height="15" viewBox="0 0 16 15"><path d="M3 1h3l2-1 2 1h3q2 0 2 2v7q0 2-2 2h-3l-2 2-2-2H3q-2 0-2-2V3q0-2 2-2z" fill="#fff" stroke="#555" /><text x="8" y="9.500" text-anchor="middle" font-size="8" font-weight="700" fill="#555">a·z</text></svg>
  {:else if n === 'filter'}
    <svg width="8" height="7" viewBox="0 0 8 7"><path d="M0 .5h8" stroke="#666" /><path d="M0 2.500h8L4 7z" fill="#666" /></svg>
  {:else if n === 'up'}
    <svg width="9" height="7" viewBox="0 0 9 7"><path d="M1 5.500l3.500-3.500L8 5.500" fill="none" stroke="#505050" stroke-width="2" /></svg>
  {:else if n === 'down'}
    <svg width="9" height="7" viewBox="0 0 9 7"><path d="M1 1.500L4.500 5 8 1.500" fill="none" stroke="#505050" stroke-width="2" /></svg>
  {:else if n === 'right'}
    <svg width="7" height="9" viewBox="0 0 7 9"><path d="M1.500 1L5 4.500 1.500 8" fill="none" stroke="#505050" stroke-width="2" /></svg>
  {:else if n === 'chev'}
    <svg width="9" height="6" viewBox="0 0 9 6"><path d="M.5 .8l4 4 4-4" fill="none" stroke="#888" stroke-width="1.300" /></svg>
  {:else if n === 'panelCtl'}
    <svg width="25" height="10" viewBox="0 0 25 10"><path d="M0 3h9L4.500 7z" fill="#fff" /><path d="M18 .7h4v5h-4zM21.500 .7v5M16.500 6h7M20 6v4" fill="none" stroke="#fff" stroke-width="1.200" /></svg>
    <svg width="8" height="8" viewBox="0 0 8 8"><path d="M.5 .5l7 7M7.500 .5l-7 7" stroke="#fff" stroke-width="1.500" /></svg>
  {/if}
{/snippet}

{#snippet feeder(kind)}
  <svg width="15" height="14" viewBox="0 0 15 14" shape-rendering="crispEdges">
    <path d="M2.500 5v8M1 10h13M10.500 7v6M9 9h3" stroke="#000080" stroke-width="1.400" fill="none" />
    <rect x="0" y="0" width="5" height="5" fill="#008000" />
    {#if kind !== 'f'}<path d="M7 3l2.500 2.500L14 .5" stroke={kind === 's' ? '#1c9c1c' : '#f00000'} stroke-width="2" fill="none" />{/if}
  </svg>
{/snippet}

{#snippet check(off)}
  <svg class="check" width="13" height="13" viewBox="0 0 13 13"><rect x=".5" y=".5" width="12" height="12" fill="#fff" stroke={off ? '#ccc' : '#333'} /><path d="M2.500 6.500l3 3 5.500-6" fill="none" stroke={off ? '#ccc' : '#444'} stroke-width="1.200" /></svg>
{/snippet}

{#snippet symbol(n)}
  <svg class="symbol" width="26" height="28" viewBox="0 0 26 28">
    <g fill="none" stroke="#000" stroke-width="1.100">
      {#if n === 'net'}
        <path d="M4.500 3h17v16h-17zM13 19v7M4.500 3l17 16M21.500 3l-17 16M13 3l8.500 8L13 19 4.500 11z" />
      {:else if n === 'nested'}
        <rect x="4.500" y="5.500" width="17" height="17" /><rect x="6.500" y="7.500" width="13" height="13" fill="#000" /><path d="M10 5V2M16 5V2M10 23v3M16 23v3M4 10H1M4 18H1M22 10h3M22 18h3" />
      {:else if n === 'horiz'}
        <path d="M2 14h22" stroke-width="4" />
      {:else if n === 'vert'}
        <path d="M13 3v22" stroke-width="4" />
      {:else if n === 'node'}
        <circle cx="13" cy="14" r="3.200" fill="#000" />
      {:else if n === 'cable'}
        <path d="M13 2v5l-2 1 3 2-2 2 1 1v2l2 2-3 1 2 2-1 1v5" />
      {:else if n === 'over'}
        <rect x="10.500" y="5" width="5" height="18" rx="1" /><path d="M13 2v3M13 23v3" />
      {:else if n === 'bus'}
        <path d="M4 2l6 4v6M22 2l-6 4v6M4 26l6-4v-6M22 26l-6-4v-6M13 2v24" />
      {:else if n === 'dbl'}
        <rect x="6" y="5" width="4" height="18" /><rect x="16" y="5" width="4" height="18" /><path d="M8 2v3M8 23v3M18 2v3M18 23v3" />
      {:else if n === 'dbl2'}
        <rect x="6" y="5" width="4" height="17" /><rect x="16" y="5" width="4" height="17" /><path d="M5 2.500h16M8 2v3M18 2v3M8 22v3M18 22v3" /><path d="M5 26h16" stroke-width="2" />
      {:else if n === 'wecs'}
        <circle cx="12.500" cy="14" r="7" /><path d="M12.500 2v12l-6 5M12.500 14l6 5M12 8c-2 2-2 4 .5 6M8 18c2 2 4 1 4.500-4M18 18c0-2-2-4-5.500-4" stroke-width="1.500" />
      {:else}
        <circle cx="13" cy="15" r="9.300" /><path d="M13 2v4" />
      {/if}
    </g>
    {#if n === 'ecg'}<text x="13" y="18" font-size="7.500" text-anchor="middle" textLength="13">ECG</text>{/if}
    {#if n === 'ig'}<text x="13" y="18" font-size="8.500" text-anchor="middle">IG</text>{/if}
    {#if n === 'g'}<text x="13" y="19" font-size="11" text-anchor="middle">G</text>{/if}
  </svg>
{/snippet}

<div class="screen">
  <main class="window">
    <header class="titlebar">
      {@render icon('logo')}
      <span>CYME 9.0 r5 - CYMDIST</span>
      <svg class="sysbtns" width="102" height="12" viewBox="0 0 102 12"><path d="M0 6.500h10M47.500 3.500h7v7h-7zM49.500 3.500v-2h7v7h-2M91 1l10 10M101 1L91 11" fill="none" stroke="#8a8a8a" /></svg>
    </header>
    <div class="menuspace"></div>
    <div class="bars">
      <div class="bar first">
        {#each mainBar as [k, w]}
          <div class="slot" style:width="{w}px">
            {#if k === 'sep'}<i class="sep"></i>
            {:else if k === 'warnBtn'}<span class="active">{@render icon('warn')}</span>
            {:else}{@render icon(k)}{/if}
          </div>
        {/each}
        <div class="overflow"><b></b>{@render icon('caret')}</div>
      </div>
      <div class="bar second">
        <i class="grip"></i>
        <div class="combo main"><span class="hint">Search</span><b>{@render icon('caret')}</b></div>
        <div class="slot bino">{@render icon('bino')}</div>
        <div class="slot tb">{@render icon('tableBino')}</div>
        <div class="overflow"><b></b>{@render icon('caret')}</div>
      </div>
    </div>

    <div class="workspace">
      <section class="doc">
        <div class="doctabs"><svg width="10" height="6" viewBox="0 0 10 6"><path d="M0 0h10L5 6z" /></svg></div>
        <div class="docbar">
          <div class="slot mon">{@render icon('monitor')}</div>
          <div class="slot s10">{@render icon('caret')}</div>
          <i class="sep"></i>
          <div class="combo dc"><span>Network color (random)</span><b>{@render icon('caret')}</b></div>
          <div class="slot s28">{@render icon('legend')}</div>
          <i class="sep"></i>
          <div class="slot s30">{@render icon('rainbow')}</div>
          <div class="slot s10 cr">{@render icon('caret')}</div>
          <i class="sep"></i>
          <div class="combo dc"><span>Default Tags</span><b>{@render icon('caret')}</b></div>
          <div class="slot s28">{@render icon('tag')}</div>
          <i class="sep"></i>
          <div class="active props">{@render icon('pick')}<span>Properties</span>{@render icon('caret')}</div>
          <i class="sep"></i>
          <div class="picks">{@render icon('selRect')}{@render icon('selTree')}{@render icon('selNone')}</div>
        </div>
        <div class="canvasrow">
          <svg class="map" width="1768" height="620" viewBox="0 118 1768 620" shape-rendering="crispEdges" fill="none">
            <g transform="translate(820 270) scale(.33333)">
              {#each westPaths as p}<path d={p.d} stroke={p.color} class="w{p.w}" class:dash={p.dash} />{/each}
            </g>
            <g transform="translate(1270 110) scale(.33333)">
              {#each eastPaths as p}<path d={p.d} stroke={p.color} class="w{p.w}" class:dash={p.dash} />{/each}
            </g>
          </svg>
          <div class="vscroll mapv">{@render icon('up')}<i></i>{@render icon('down')}</div>
        </div>
        <div class="hscroll"><i></i>{@render icon('right')}</div>
      </section>

      <aside class="toolbox">
        <div class="paneltitle"><span>Toolbox</span>{@render icon('panelCtl')}</div>
        <div class="tbody">
          <div class="toolbar2">
            {@render icon('burger')}<i class="sep"></i>{@render icon('add')}<i class="sep"></i>{@render icon('lock')}{@render icon('link')}<b>{@render icon('more')}</b>
          </div>
          <div class="tlist">
            <div class="titems">
              <div class="thead"><span></span><span>Type</span><span>ID</span></div>
              {#each groups as [name, items]}
                <div class="tgroup">{@render icon('down')}<span>{name}</span></div>
                {#each items as [s, label, id]}
                  <div class="titem">
                    {@render symbol(s)}<span class="tl">{label}</span>
                    {#if id}<span class="tid">{id}</span>{@render icon('chev')}{/if}
                  </div>
                {/each}
              {/each}
              <div class="tpart"><i></i></div>
            </div>
            <div class="vscroll tbv">{@render icon('up')}<i></i>{@render icon('down')}</div>
          </div>
        </div>
        <div class="ttabs">
          <span>{@render icon('props')}P</span>
          <span class="on">{@render icon('case')}T</span>
          <span>{@render icon('monitor')}<em>D</em></span>
          <span class="last">{@render icon('chart')}<em>C</em></span>
        </div>
      </aside>
    </div>

    <section class="errors">
      <div class="paneltitle"><span></span>{@render icon('panelCtl')}</div>
      <div class="etools">
        {@render icon('burger')}<i class="sep"></i>
        <div class="combo"><span class="hint">Search</span><b>{@render icon('caret')}</b></div>
        {@render icon('lens')}{@render icon('tableBino')}
      </div>
      <div class="erow ehead"><span></span><span>Severity</span><span>Code</span><span>Message</span><span>Location</span><span>Network</span></div>
      {#each errors as [loc, from, to], i}
        <div class="erow">
          <span class="num">{i + 1}</span>
          <span class="sev">{@render icon('warn')}Warning</span>
          <span class="code">350107</span>
          <span class="msg">The section {loc} was transferred from network {from} to network {to}.</span>
          <span class="link">{loc}</span>
          <span class="link">{to}</span>
        </div>
      {/each}
      <div class="efill"></div>
      <div class="etabs">
        <div class="lead"><svg width="10" height="6" viewBox="0 0 10 6"><path d="M0 0h10L5 6z" /></svg></div>
        <div class="etab cur"><svg width="18" height="17" viewBox="0 0 18 17"><path d="M0 0l13 15q1 1.500 5 1.500V0z" fill="#fff" /><path d="M0 0l13 15q1 1.500 5 1.500" fill="none" stroke="#888" /></svg><span>Input Data Error Report</span><svg class="x" width="8" height="8" viewBox="0 0 8 8"><path d="M1 .5l6 7M7 .5l-6 7" stroke="#000" stroke-width="1.400" /></svg></div>
        <div class="etab ed"><span>Edition Error Report</span></div>
        <div class="etab sim"><span>Simulation Error Report</span></div>
        <svg class="nav" width="24" height="10" viewBox="0 0 24 10"><path d="M5 1v8L1 5zM19 1v8l4-4z" fill="#fff" stroke="#000" /></svg>
      </div>
      <div class="status"></div>
    </section>
  </main>
  <div class="edge"><i></i></div>

  <section class="dialog">
    <header class="dtitle">
      {@render icon('logo')}<span>Select Networks</span><b>?</b>
      <svg width="11" height="11" viewBox="0 0 11 11"><path d="M.5 .5l10 10M10.500 .5l-10 10" stroke="#111" stroke-width="1.100" /></svg>
    </header>
    <div class="dtools">
      {@render icon('burger')}<i class="sep"></i>
      <div class="combo"><span class="hint">Search in Network ID</span><b>{@render icon('caret')}</b></div>
      {@render icon('lens')}{@render icon('tableBino')}<i class="sep"></i>{@render icon('filterBino')}
    </div>
    <div class="dlist">
      <div class="dtable">
        <div class="drow dhead">
          <span class="c1">{@render check(false)}<em>Network ID</em>{@render icon('sort')}{@render icon('filter')}</span>
          <span><em>Network<br />Type</em>{@render icon('filter')}</span>
          <span><em>Area</em>{@render icon('filter')}</span>
          <span><em>Voltage level</em>{@render icon('filter')}</span>
          <span><em>Region</em>{@render icon('filter')}</span>
          <span class="disp">{@render check(false)}Display</span>
        </div>
        {#each networks as [name, kind]}
          <div class="drow">
            <span class="c1">{@render check(kind === 'r')}{@render feeder(kind)}<em class="nm">{name}</em></span>
            <span>{kind === 's' ? 'Substation' : 'Feeder'}</span>
            <span class="un">Undefin</span>
            <span class="un">Undefined</span>
            <span class="un">Undefined</span>
            <span class="disp">{@render check(false)}Display</span>
          </div>
        {/each}
      </div>
      <div class="vscroll dv">{@render icon('up')}<i></i>{@render icon('down')}</div>
    </div>
    <div class="dform">
      <div class="frow sum"><span class="lab">Networks Summary</span><span>51 in Database</span><span>51 in Memory</span></div>
      <div class="frow tr"><span class="lab">Tracing Mode</span><div class="select wide">Load selected network(s) with all dependencies{@render icon('chev')}</div></div>
      <div class="frow ti"><span class="lab">Ties</span><div class="select">None{@render icon('chev')}</div></div>
      <div class="btns"><button class="ok">OK</button><button>Cancel</button></div>
    </div>
  </section>
</div>

<style>
  :global(body) { margin: 0; overflow: hidden; }
  .screen, .screen * { box-sizing: border-box; }
  .screen { position: relative; display: flex; width: 1931px; height: 1024px; background: #e5e5e5; font: 11px/14px 'Noto Sans', 'Open Sans', sans-serif; letter-spacing: -.15px; color: #000; overflow: hidden; white-space: nowrap; }
  svg { flex: none; display: block; }
  svg text { letter-spacing: 0; }
  em { font-style: normal; }
  .window { width: 1920px; display: flex; flex-direction: column; }
  .edge { width: 11px; background: linear-gradient(#464775 104px, #e8e8e8 104px); border-left: 1px solid #d8d8d8; padding: 233px 0 0 3px; }
  .edge i { display: block; width: 5px; height: 104px; border-radius: 2px; background: #6264a7; }
  .titlebar { height: 23px; background: #fff; display: flex; align-items: center; padding: 0 19px 0 1px; color: #999; font-size: 12px; gap: 5px; letter-spacing: -.2px; }
  .sysbtns { margin-left: auto; margin-top: -3px; }
  .menuspace { height: 24px; background: #dedede linear-gradient(90deg, #dcdcdc 800px, #e5e5e5 1700px); }
  .bars { height: 26px; display: flex; gap: 1px; padding-left: 817px; background: linear-gradient(90deg, #dcdcdc 800px, #e5e5e5 1500px); }
  .bar { display: flex; align-items: center; height: 26px; background: linear-gradient(#ededed, #e4e4e4 50%, #c8c8c8); border-bottom: 1px solid #b5b5b5; border-radius: 0 4px 4px 0; }
  .slot { display: flex; align-items: center; justify-content: center; flex: none; }
  .sep { width: 1px; height: 17px; background: #c4c4c4; flex: none; }
  .active { display: flex; align-items: center; justify-content: center; width: 22px; height: 22px; background: #cfe6f8; border: 1px solid #0a78d7; }
  .warn { width: 16px; height: 15px; }
  .overflow { width: 11px; height: 25px; margin-left: auto; display: flex; flex-direction: column; align-items: center; justify-content: flex-end; gap: 1px; padding-bottom: 4px; background: linear-gradient(#e4e4e4, #999); border-radius: 0 6px 4px 0; }
  .overflow b { width: 6px; height: 1px; background: #000; }
  .first { width: 277px; }
  .second { width: 266px; }
  .grip { width: 3px; height: 16px; margin: 0 6px 0 3px; background: repeating-linear-gradient(#aaa 0 2px, transparent 2px 5px); }
  .combo { display: flex; align-items: center; height: 18px; background: #fff; border: 1px solid #f4f4f4; }
  .combo span { flex: 1; padding-left: 2px; font-size: 12px; letter-spacing: -.4px; }
  .combo .hint { color: #6e6e6e; letter-spacing: -.25px; }
  .combo b { width: 12px; height: 16px; display: flex; align-items: center; justify-content: center; background: linear-gradient(#e8e8e8, #cfcfcf); }
  .combo.main { width: 194px; }
  .bino { width: 26px; } .tb { width: 20px; }
  .workspace { height: 689px; display: flex; gap: 4px; }
  .doc { width: 1788px; height: 685px; border: 1px solid #999; border-left: 0; display: flex; flex-direction: column; background: #eee; }
  .doctabs { height: 19px; background: #f0f0f0; border-bottom: 1px solid #a8a8b0; display: flex; align-items: center; justify-content: flex-end; padding-right: 6px; }
  .docbar { height: 25px; width: 1783px; display: flex; align-items: center; padding-left: 821px; background: linear-gradient(#ededed, #e0e0e0 50%, #c4c4c4); border-bottom: 1px solid #666; }
  .docbar .combo span { color: #000; font-size: 11.500px; letter-spacing: -.3px; }
  .mon { width: 18px; } .s10 { width: 12px; } .s28 { width: 29px; } .s30 { width: 29px; } .cr { margin-right: 5px; }
  .docbar .s10 + .sep { margin-left: 6px; margin-right: 5px; }
  .docbar .cr + .sep { margin-left: -2px; margin-right: 4px; }
  .dc { width: 194px; height: 18px; }
  .props { width: 93px; height: 23px; margin: 0 4px 0 5px; gap: 3px; justify-content: space-between; padding: 0 3px 0 5px; font-size: 11.500px; letter-spacing: -.2px; }
  .picks { display: flex; gap: 7px; margin-left: 6px; }
  .canvasrow { height: 620px; width: 1783px; display: flex; background: #fff; }
  .map path { stroke-linecap: square; }
  .w1 { stroke-width: 3.300; } .w2 { stroke-width: 6; } .w3 { stroke-width: 8; }
  .map .dash { stroke-dasharray: 12 9; stroke-linecap: butt; }
  .vscroll { width: 15px; background: #f0f0f0; display: flex; flex-direction: column; align-items: center; }
  .vscroll i { width: 15px; background: #cdcdcd; }
  .mapv { padding: 6px 0; justify-content: space-between; }
  .mapv i { height: 398px; margin: 43px 0 auto; }
  .hscroll { height: 15px; width: 1783px; background: #f0f0f0; display: flex; align-items: center; }
  .hscroll i { width: 1503px; height: 15px; background: #cdcdcd; margin-right: 252px; }
  .toolbox { width: 128px; display: flex; flex-direction: column; }
  .paneltitle { height: 20px; background: #bababa; border: 1px solid #9c9c9c; display: flex; align-items: center; color: #fff; padding: 0 5px 0 4px; font-size: 12px; letter-spacing: .1px; gap: 9px; }
  .paneltitle span { flex: 1; }
  .tbody { height: 641px; border: solid #f4f4f4; border-width: 4px 4px 0 4px; }
  .toolbar2 { height: 24px; display: flex; align-items: center; padding-left: 7px; background: linear-gradient(#ededed, #c8c8c8); gap: 6px; }
  .toolbar2 b { align-self: stretch; margin-left: auto; width: 10px; background: linear-gradient(#e4e4e4, #888); padding: 6px 0 0 1px; }
  .tlist { display: flex; height: 613px; background: #f0f0f0; }
  .titems { width: 103px; background: #fff; overflow: hidden; }
  .thead { height: 24px; display: flex; background: linear-gradient(#ececec, #e0e0e0); border-bottom: 1px solid #bbb; color: #444; font-size: 12px; line-height: 22px; letter-spacing: -.4px; }
  .thead span { width: 40px; border-right: 1px solid #bbb; padding-left: 1px; }
  .thead span:first-child { width: 35px; } .thead span:last-child { width: 28px; }
  .tgroup { height: 24px; display: flex; align-items: center; gap: 5px; padding-left: 5px; background: linear-gradient(#eee, #ddd); color: #444; font-size: 11px; letter-spacing: -.3px; }
  .titem { height: 30px; display: flex; align-items: center; padding-left: 2px; }
  .titem .symbol { margin-top: -1px; }
  .tl { width: 48px; padding-left: 8px; flex: none; letter-spacing: -.35px; }
  .tid { width: 14px; flex: none; color: #06c; }
  .tpart { height: 20px; padding: 2px 16px; } .tpart i { display: block; width: 1px; height: 5px; background: #000; }
  .tbv { margin-left: 1px; padding: 6px 0 4px; justify-content: space-between; }
  .tbv i { height: 115px; margin: 4px 0 auto; }
  .ttabs { height: 24px; border-top: 1px solid #777; display: flex; padding-left: 5px; color: #555; }
  .ttabs span { display: flex; align-items: center; width: 28px; gap: 3px; padding-left: 1px; height: 22px; overflow: hidden; }
  .ttabs span em { width: 5px; overflow: hidden; }
  .ttabs .on { width: 30px; background: #fff; border: 1px solid #888; border-top: 0; border-radius: 0 0 4px 4px; color: #000; padding-left: 3px; gap: 2px; }
  .ttabs span:nth-child(3) { padding-left: 5px; width: 31px; border-right: 1px solid #888; }
  .ttabs .last { padding-left: 2px; }
  .errors { height: 262px; display: flex; flex-direction: column; }
  .etools { height: 24px; display: flex; align-items: center; padding-left: 7px; gap: 8px; background: linear-gradient(#ededed, #e0e0e0 50%, #c6c6c6); }
  .etools .combo { width: 244px; margin-left: -1px; }
  .etools .lens { margin-left: -2px; }
  .erow { display: grid; grid-template-columns: 55px 75px 49px 1235px 346px 160px; height: 19px; background: #fff; }
  .erow span { border-right: 1px solid #dcdcdc; border-bottom: 1px solid #dcdcdc; padding-left: 2px; line-height: 18px; overflow: hidden; }
  .ehead { height: 24px; background: linear-gradient(#efefef, #e0e0e0); }
  .ehead span { line-height: 23px; color: #444; border-color: #bbb; }
  .erow .num { background: linear-gradient(#efefef, #e0e0e0); border-color: #c0c0c0; color: #555; }
  .erow .sev { display: flex; align-items: center; gap: 2px; padding-left: 3px; letter-spacing: -.2px; }
  .sev .warn { width: 14px; height: 15px; }
  .erow .msg { letter-spacing: -.32px; }
  .erow .link { color: #0066cc; letter-spacing: -.26px; }
  .efill { height: 20px; background: #fff; }
  .etabs { height: 19px; display: flex; background: #f0f0f0; font-size: 11.500px; letter-spacing: -.3px; line-height: 17px; }
  .lead { width: 20px; padding: 7px 0 0 4px; }
  .etab { display: flex; height: 17px; background: #f0f0f0; border: 1px solid #999; border-top: 0; border-radius: 0 0 3px 6px; padding-left: 10px; margin-left: 1px; }
  .cur { width: 167px; border-left: 0; padding-left: 0; border-radius: 0 0 3px 0; margin: 0; background: linear-gradient(90deg, #f0f0f0 18px, #fff 18px); }
  .cur span { margin-left: 4px; } .cur .x { margin: 4px 5px 0 auto; }
  .ed { width: 121px; } .sim { width: 140px; }
  .nav { margin: 4px 12px 0 auto; }
  .status { height: 3px; background: #dcdcdc; }

  .dialog { position: absolute; left: 0; top: 21px; width: 817px; height: 770px; background: #f0f0f0; border: 1px solid #666; box-shadow: 0 2px 15px rgba(0, 0, 0, .38); display: flex; flex-direction: column; }
  .dtitle { height: 32px; background: #fff; display: flex; align-items: center; padding: 0 17px 0 10px; font-size: 12px; gap: 4px; letter-spacing: -.25px; }
  .dtitle b { margin-left: auto; margin-right: 34px; font-weight: 600; }
  .dtools { height: 24px; display: flex; align-items: center; padding-left: 7px; gap: 5px; background: linear-gradient(#ececec, #e2e2e2 50%, #c8c8c8); }
  .dtools .combo { width: 244px; }
  .dtools > .sep:first-of-type { margin-left: 3px; margin-right: 1px; }
  .dlist { height: 572px; display: flex; background: #fff; overflow: hidden; }
  .dtable { width: 797px; }
  .drow { height: 19px; display: grid; grid-template-columns: 240px 79px 44px 144px 144px 146px; }
  .drow > span { display: flex; align-items: center; padding: 0 0 2px 1px; overflow: hidden; letter-spacing: -.2px; }
  .drow .check { margin-top: -1px; }
  .drow .c1 { padding-left: 3px; gap: 3px; }
  .drow .nm { margin-left: -2px; }
  .drow .un { color: #e9e9e9; padding-right: 4px; }
  .drow .disp { padding-left: 3px; gap: 3px; }
  .dhead { height: 28px; background: linear-gradient(#efefef, #dedede); color: #444; line-height: 13px; }
  .dhead > span { border-right: 1px solid #bbb; border-bottom: 1px solid #bbb; padding-right: 7px; }
  .dhead em { flex: 1; }
  .dhead .c1 .check + em { margin-right: 0; }
  .dv { margin-left: 1px; padding: 5px 0; justify-content: space-between; }
  .dv i { height: 295px; margin: 5px 0 auto; }
  .dform { flex: 1; padding: 17px 10px 0 6px; letter-spacing: -.28px; }
  .frow { display: flex; align-items: center; height: 20px; margin-bottom: 6px; }
  .frow .lab { width: 199px; margin-right: 0; }
  .sum { height: 14px; margin-bottom: 19px; } .sum span { margin-right: 15px; } .sum .lab { width: 201px; margin-right: 0; }
  .select { width: 200px; height: 20px; display: flex; align-items: center; justify-content: space-between; background: #fff; border: 1px solid #dcdcdc; padding: 0 3px 0 1px; }
  .wide { width: 400px; }
  .btns { display: flex; justify-content: flex-end; gap: 6px; margin-top: 16px; }
  button { width: 73px; height: 21px; padding: 0; font: inherit; letter-spacing: inherit; background: #e1e1e1; border: 1px solid #adadad; }
  .ok { border: 2px solid #0078d7; }
</style>
